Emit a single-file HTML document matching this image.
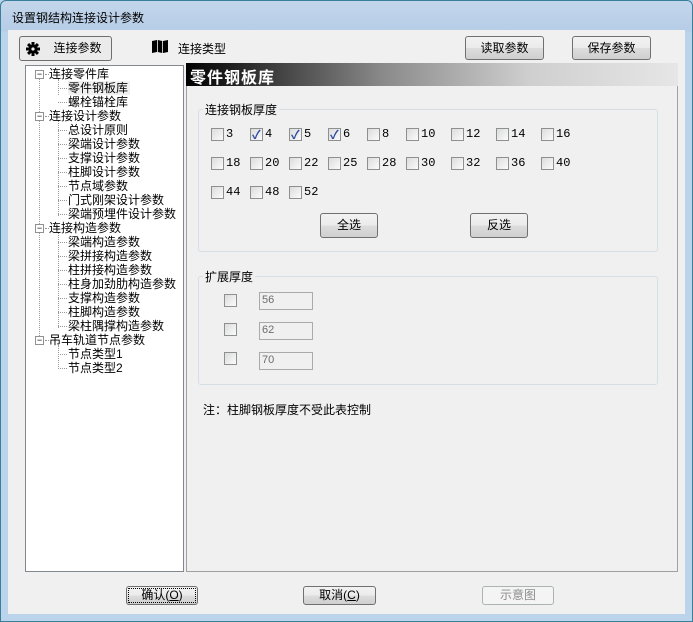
<!DOCTYPE html>
<html><head><meta charset="utf-8">
<style>
*{margin:0;padding:0;box-sizing:border-box}
body{width:693px;height:622px;overflow:hidden;background:#bcd3ec;font-family:"Liberation Sans","Noto Sans CJK SC","WenQuanYi Zen Hei",sans-serif;font-size:12px;color:#000;position:relative}
.abs{position:absolute}
#win{left:0;top:0;width:693px;height:622px;border:1px solid #3a7f9a;border-radius:6px 6px 0 0;background:linear-gradient(#c3d6eb,#b6cde7 30px,#bcd3ec 31px)}
#title{left:12px;top:9px;font-size:12px;color:#000}
#client{left:8px;top:30px;width:677px;height:584px;background:#f0f0f0}
.btn{position:absolute;border:1px solid #707070;border-radius:3px;background:linear-gradient(#f2f2f2 0%,#ebebeb 50%,#dddddd 51%,#cfcfcf 100%);text-align:center;font-size:12px}
#tree{left:25px;top:65px;width:159px;height:507px;background:#fff;border:1px solid #828790}
#panel{left:186px;top:63px;width:492px;height:509px;border:1px solid #a0a0a0;border-top:none}
#hdr{left:186px;top:63px;width:492px;height:23px;background:linear-gradient(90deg,#000 0%,#2a2a2a 12%,#8a8a8a 40%,#cfcfcf 70%,#e6e6e6 100%);color:#fff;font-size:16px;font-weight:bold;padding:1px 0 0 4px;letter-spacing:1px}
.ti{position:absolute;font-size:12px;line-height:14px;white-space:nowrap}
.pm{position:absolute;width:9px;height:9px;border:1px solid #919191;background:#fff;font-size:9px;line-height:7px;text-align:center;color:#000}
.dv{position:absolute;border-left:1px dotted #999;width:0}
.dh{position:absolute;border-top:1px dotted #999;height:0}
.grp{position:absolute;border:1px solid #d5dfe5;border-radius:3px}
.lg{position:absolute;background:#f0f0f0;padding:0 2px;font-size:12px}
.cb{position:absolute;width:13px;height:13px;border:1px solid #8e8f8f;background:linear-gradient(135deg,#dcdcdc,#fbfbfb)}
.cbl{position:absolute;font-size:12px;font-family:"Liberation Mono","Noto Sans CJK SC",monospace}
.ck::after{content:"✓";position:absolute;left:1px;top:-3px;color:#2c4a9c;font-size:12px;font-weight:bold}
.tb{position:absolute;width:54px;height:18px;border:1px solid #aaa;background:#f0f0f0;color:#6d6d6d;font-size:11px;padding:1px 0 0 2px}
</style></head><body>
<div id="win" class="abs"></div>
<div id="title" class="abs">设置钢结构连接设计参数</div>
<div id="client" class="abs"></div>

<div class="btn" style="left:19px;top:36px;width:93px;height:25px;border-color:#6f6f6f;background:#ebebeb;line-height:23px;padding-left:24px">连接参数
<svg style="position:absolute;left:6px;top:5px" width="14" height="14" viewBox="0 0 14 14"><g fill="#000"><circle cx="7" cy="7" r="4.5"/><rect x="5.5" y="0" width="3" height="14"/><rect x="0" y="5.5" width="14" height="3"/><rect x="5.5" y="0" width="3" height="14" transform="rotate(45 7 7)"/><rect x="5.5" y="0" width="3" height="14" transform="rotate(-45 7 7)"/></g><circle cx="7" cy="7" r="1.6" fill="#ebebeb"/></svg></div>
<svg class="abs" style="left:152px;top:40px" width="16" height="13" viewBox="0 0 16 13"><path d="M0 1 L5 0 L5 12 L0 13Z M5.8 0 L10.2 1 L10.2 13 L5.8 12Z M11 1 L16 0 L16 12 L11 13Z" fill="#000"/></svg>
<div class="abs" style="left:178px;top:40px">连接类型</div>
<div class="btn" style="left:465px;top:36px;width:79px;height:24px;line-height:22px">读取参数</div>
<div class="btn" style="left:572px;top:36px;width:79px;height:24px;line-height:22px">保存参数</div>

<div id="tree" class="abs"></div>
<div class="dv" style="left:39px;top:79px;height:261px"></div>
<div class="dv" style="left:58px;top:79px;height:16px"></div>
<div class="dv" style="left:58px;top:121px;height:95px"></div>
<div class="dv" style="left:58px;top:233px;height:95px"></div>
<div class="dv" style="left:58px;top:345px;height:24px"></div>
<div id="treeitems"></div>
<script>
var items=[[0,"连接零件库"],[1,"零件钢板库",1],[1,"螺栓锚栓库"],[0,"连接设计参数"],[1,"总设计原则"],[1,"梁端设计参数"],[1,"支撑设计参数"],[1,"柱脚设计参数"],[1,"节点域参数"],[1,"门式刚架设计参数"],[1,"梁端预埋件设计参数"],[0,"连接构造参数"],[1,"梁端构造参数"],[1,"梁拼接构造参数"],[1,"柱拼接构造参数"],[1,"柱身加劲肋构造参数"],[1,"支撑构造参数"],[1,"柱脚构造参数"],[1,"梁柱隅撑构造参数"],[0,"吊车轨道节点参数"],[1,"节点类型1"],[1,"节点类型2"]];
var h="";
items.forEach(function(it,i){var y=67+i*14;var c=y+7;
if(it[0]==0){h+='<div class="pm" style="left:35px;top:'+(c-4)+'px">−</div><div class="dh" style="left:45px;top:'+c+'px;width:4px"></div><div class="ti" style="left:49px;top:'+y+'px">'+it[1]+'</div>';}
else{h+='<div class="dh" style="left:58px;top:'+c+'px;width:9px"></div><div class="ti" style="left:68px;top:'+y+'px;'+(it[2]?'background:#f0f0f0;padding-right:2px':'')+'">'+it[1]+'</div>';}});
document.getElementById("treeitems").innerHTML=h;
</script>

<div id="panel" class="abs"></div>
<div id="hdr" class="abs">零件钢板库</div>

<div class="grp" style="left:198px;top:109px;width:460px;height:143px"></div>
<div class="lg" style="left:203px;top:101px">连接钢板厚度</div>
<div id="cbs"></div>
<script>
var xs=[211,250,289,328,367,406,451,496,541];
var rows=[["3","4","5","6","8","10","12","14","16"],["18","20","22","25","28","30","32","36","40"],["44","48","52"]];
var ys=[128,157,186];var h="";
rows.forEach(function(r,ri){r.forEach(function(v,ci){var x=xs[ci],y=ys[ri];var ck=(ri==0&&ci>=1&&ci<=3)?" ck":"";
h+='<div class="cb'+ck+'" style="left:'+x+'px;top:'+y+'px"></div><div class="cbl" style="left:'+(x+15)+'px;top:'+(y-1)+'px">'+v+'</div>';});});
document.getElementById("cbs").innerHTML=h;
</script>
<div class="btn" style="left:320px;top:213px;width:58px;height:25px;line-height:23px">全选</div>
<div class="btn" style="left:470px;top:213px;width:58px;height:25px;line-height:23px">反选</div>

<div class="grp" style="left:198px;top:276px;width:460px;height:109px"></div>
<div class="lg" style="left:203px;top:268px">扩展厚度</div>
<div class="cb" style="left:224px;top:294px"></div><div class="tb" style="left:259px;top:292px">56</div>
<div class="cb" style="left:224px;top:323px"></div><div class="tb" style="left:259px;top:322px">62</div>
<div class="cb" style="left:224px;top:352px"></div><div class="tb" style="left:259px;top:352px">70</div>
<div class="abs" style="left:203px;top:401px">注：柱脚钢板厚度不受此表控制</div>

<div class="btn" style="left:126px;top:586px;width:72px;height:19px;line-height:17px;outline:1px dotted #000;outline-offset:-3px">确认(<u>O</u>)</div>
<div class="btn" style="left:303px;top:586px;width:73px;height:19px;line-height:17px">取消(<u>C</u>)</div>
<div class="btn" style="left:482px;top:586px;width:72px;height:19px;line-height:17px;border-color:#adb2b5;background:#f4f4f4;color:#8d8d8d">示意图</div>
</body></html>
